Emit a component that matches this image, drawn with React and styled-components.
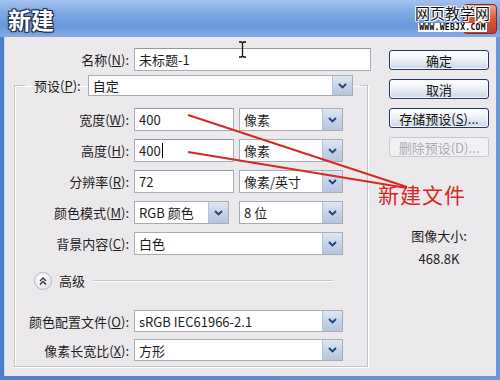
import React from 'react';
import styled, { createGlobalStyle } from 'styled-components';

const GlobalStyle = createGlobalStyle`
    html, body {
        margin: 0;
        padding: 0;
        background: #ece9ec;
    }
    body {
        font-family: "Noto Sans CJK SC", "Liberation Sans", sans-serif;
        font-size: 13px;
        color: #1d1d1d;
    }
`;

const FONT = '"Noto Sans CJK SC", "Liberation Sans", sans-serif';

const Window = styled.div`
    position: relative;
    width: 500px;
    height: 380px;
    display: flex;
    flex-direction: column;
    overflow: hidden;
    background: #5a88d2;
`;

const TitleBar = styled.div`
    height: 37px;
    flex: none;
    display: flex;
    align-items: center;
    justify-content: space-between;
    padding: 0 3px 0 8px;
    box-sizing: border-box;
    background: linear-gradient(to bottom, #a3c2ee 0%, #80a9e3 35%, #6a97dc 70%, #86ace2 100%);
`;

const Title = styled.div`
    font-family: ${FONT};
    font-size: 23px;
    font-weight: 700;
    color: #fff;
    text-shadow: -1px -1px 0 #1b2c4a, 1px -1px 0 #1b2c4a, -1px 1px 0 #1b2c4a, 1px 1px 0 #1b2c4a,
        0 0 3px #1b2c4a;
    line-height: 1;
    margin-top: 1px;
`;

const CloseBtn = styled.div`
    width: 32px;
    height: 28px;
    border-radius: 4px;
    border: 1px solid #7a2b22;
    background: linear-gradient(to bottom, #f0a08c, #d9563d 50%, #c2402a);
    display: flex;
    align-items: center;
    justify-content: center;
`;

const Frame = styled.div`
    flex: 1;
    display: flex;
    padding: 0 4px 4px 4px;
    background: linear-gradient(to right, #4f7fcb, #6a98dc);
`;

const Body = styled.div`
    flex: 1;
    display: flex;
    gap: 18px;
    padding: 11px 0 0 9px;
    background: #ece9ec;
    border-left: 1px solid #c9d6ea;
`;

const LeftCol = styled.div`
    width: 357px;
    display: flex;
    flex-direction: column;
`;

const FormRow = styled.div`
    display: grid;
    grid-template-columns: ${p => p.$label || 114}px 1fr;
    column-gap: 5px;
    align-items: center;
    height: ${p => p.$h || 23}px;
    margin-top: ${p => p.$mt || 0}px;
`;

const Label = styled.label`
    text-align: right;
    white-space: nowrap;
    font-size: 13px;
    line-height: 1;
`;

const Fields = styled.div`
    display: flex;
    gap: ${p => p.$gap || 5}px;
    height: 100%;
`;

const TextBox = styled.div`
    box-sizing: border-box;
    width: ${p => (p.$w ? `${p.$w}px` : '100%')};
    height: 100%;
    background: #fff;
    border: 1px solid #a8adb5;
    border-top-color: #9399a3;
    display: flex;
    align-items: center;
    padding-left: 4px;
    font-size: 13px;
    white-space: nowrap;
`;

const Caret = styled.span`
    display: inline-block;
    width: 1px;
    height: 15px;
    background: #000;
    margin-left: 1px;
`;

const SelectBox = styled.div`
    box-sizing: border-box;
    width: ${p => (p.$w ? `${p.$w}px` : '100%')};
    height: 100%;
    background: #fff;
    border: 1px solid #a8adb5;
    display: flex;
    align-items: stretch;
`;

const SelectValue = styled.div`
    flex: 1;
    display: flex;
    align-items: center;
    padding-left: 4px;
    font-size: 13px;
    white-space: nowrap;
    overflow: hidden;
`;

const DropBtn = styled.div`
    width: 19px;
    border-left: 1px solid #b6c3d6;
    background: linear-gradient(to bottom, #dfe7f3, #c4d2e6 55%, #b5c6df);
    display: flex;
    align-items: center;
    justify-content: center;
`;

const Chevron = () => (
    <svg width="9" height="6" viewBox="0 0 9 6">
        <path d="M1 1 L4.5 4.5 L8 1" fill="none" stroke="#23407a" strokeWidth="1.8" />
    </svg>
);

const Select = ({ w, children }) => (
    <SelectBox $w={w}>
        <SelectValue>{children}</SelectValue>
        <DropBtn>
            <Chevron />
        </DropBtn>
    </SelectBox>
);

const Group = styled.fieldset`
    margin: 4px 0 0 0;
    padding: 12px 0 5px 0;
    width: 354px;
    box-sizing: border-box;
    border: 1px solid #c3c3c8;
    box-shadow: inset 1px 1px 0 #fff, 1px 1px 0 #fff;
    display: flex;
    flex-direction: column;
    min-width: 0;
`;

const Legend = styled.legend`
    margin-left: 10px;
    padding: 0 7px 0 9px;
    display: flex;
    align-items: center;
    gap: 7px;
    height: 21px;
`;

const PresetSelect = styled.div`
    width: 265px;
    height: 21px;
`;

const Rows = styled.div`
    display: flex;
    flex-direction: column;
    gap: ${p => p.$gap || 8}px;
    padding-right: 24px;
`;

const AdvancedRow = styled.div`
    display: flex;
    align-items: center;
    height: 17px;
    margin: 17px 34px 0 19px;
    gap: 7px;
`;

const RoundBtn = styled.div`
    width: 16px;
    height: 16px;
    border-radius: 50%;
    border: 1px solid #b9bcc3;
    background: radial-gradient(circle at 40% 35%, #ffffff, #dcdde2);
    display: flex;
    align-items: center;
    justify-content: center;
`;

const Rule = styled.div`
    flex: 1;
    height: 1px;
    background: #c3c3c8;
    box-shadow: 0 1px 0 #fff;
    margin-left: 1px;
`;

const RightCol = styled.div`
    width: 100px;
    display: flex;
    flex-direction: column;
    align-items: center;
    padding-top: 2px;
`;

const Buttons = styled.div`
    display: flex;
    flex-direction: column;
    gap: 9px;
    width: 100%;
`;

const Button = styled.div`
    box-sizing: border-box;
    height: 20px;
    border-radius: 3px;
    display: flex;
    align-items: center;
    justify-content: center;
    font-size: 13px;
    white-space: nowrap;
    border: 1px solid ${p => (p.$disabled ? '#c6c9d0' : '#223766')};
    color: ${p => (p.$disabled ? '#a8abb3' : '#111')};
    background: ${p =>
        p.$disabled
            ? '#f1f1f3'
            : 'linear-gradient(to bottom, #ffffff 0%, #eef1f6 45%, #cdd7e7 100%)'};
    box-shadow: ${p => (p.$disabled ? 'none' : 'inset 0 0 0 1px #f6f8fb')};
`;

const Info = styled.div`
    margin-top: ${p => p.$mt}px;
    font-size: 13px;
    line-height: 18px;
    text-align: center;
    white-space: nowrap;
`;

const Annotation = styled.div`
    position: absolute;
    left: 378px;
    top: 181px;
    font-family: ${FONT};
    font-size: 21px;
    color: #d9261f;
    letter-spacing: 1px;
    line-height: 1.3;
`;

const Overlay = styled.svg`
    position: absolute;
    left: 0;
    top: 0;
    pointer-events: none;
`;

const Watermark = styled.div`
    position: absolute;
    right: 10px;
    top: 5px;
    display: flex;
    flex-direction: column;
    align-items: center;
    gap: 2px;
`;

const WmTitle = styled.div`
    font-family: ${FONT};
    font-size: 15px;
    line-height: 16px;
    color: #111;
    text-shadow: -1px -1px 0 #fff, 1px -1px 0 #fff, -1px 1px 0 #fff, 1px 1px 0 #fff;
`;

const WmUrl = styled.div`
    font-family: "DejaVu Sans Mono", "Liberation Mono", monospace;
    font-size: 8px;
    font-weight: 700;
    line-height: 9px;
    color: #000;
    background: #fff;
    padding: 0 1px;
    letter-spacing: 0.3px;
`;

const IBeam = styled.svg`
    position: absolute;
    left: 238px;
    top: 41px;
    pointer-events: none;
`;

export default function App() {
    return (
        <>
            <GlobalStyle />
            <Window>
                <TitleBar>
                    <Title>新建</Title>
                    <CloseBtn>
                        <svg width="14" height="14" viewBox="0 0 14 14">
                            <path d="M2 2 L12 12 M12 2 L2 12" stroke="#fff" strokeWidth="2.6" />
                        </svg>
                    </CloseBtn>
                </TitleBar>
                <Frame>
                    <Body>
                        <LeftCol>
                            <FormRow $label={115}>
                                <Label>
                                    名称(<u>N</u>):
                                </Label>
                                <TextBox>未标题-1</TextBox>
                            </FormRow>
                            <Group>
                                <Legend>
                                    <Label>
                                        预设(<u>P</u>):
                                    </Label>
                                    <PresetSelect>
                                        <Select>自定</Select>
                                    </PresetSelect>
                                </Legend>
                                <Rows>
                                    <FormRow>
                                        <Label>
                                            宽度(<u>W</u>):
                                        </Label>
                                        <Fields>
                                            <TextBox $w={100}>400</TextBox>
                                            <Select w={104}>像素</Select>
                                        </Fields>
                                    </FormRow>
                                    <FormRow>
                                        <Label>
                                            高度(<u>H</u>):
                                        </Label>
                                        <Fields>
                                            <TextBox $w={100}>
                                                400
                                                <Caret />
                                            </TextBox>
                                            <Select w={104}>像素</Select>
                                        </Fields>
                                    </FormRow>
                                    <FormRow>
                                        <Label>
                                            分辨率(<u>R</u>):
                                        </Label>
                                        <Fields>
                                            <TextBox $w={100}>72</TextBox>
                                            <Select w={104}>像素/英寸</Select>
                                        </Fields>
                                    </FormRow>
                                    <FormRow>
                                        <Label>
                                            颜色模式(<u>M</u>):
                                        </Label>
                                        <Fields $gap={10}>
                                            <Select w={95}>RGB 颜色</Select>
                                            <Select w={104}>8 位</Select>
                                        </Fields>
                                    </FormRow>
                                    <FormRow>
                                        <Label>
                                            背景内容(<u>C</u>):
                                        </Label>
                                        <Fields>
                                            <Select w={209}>白色</Select>
                                        </Fields>
                                    </FormRow>
                                </Rows>
                                <AdvancedRow>
                                    <RoundBtn>
                                        <svg width="8" height="8" viewBox="0 0 8 8">
                                            <path
                                                d="M1 4 L4 1 L7 4 M1 7.5 L4 4.5 L7 7.5"
                                                fill="none"
                                                stroke="#333"
                                                strokeWidth="1.4"
                                            />
                                        </svg>
                                    </RoundBtn>
                                    <span>高级</span>
                                    <Rule />
                                </AdvancedRow>
                                <Rows $gap={7}>
                                    <FormRow $h={22} $mt={21}>
                                        <Label>
                                            颜色配置文件(<u>O</u>):
                                        </Label>
                                        <Fields>
                                            <Select w={209}>sRGB IEC61966-2.1</Select>
                                        </Fields>
                                    </FormRow>
                                    <FormRow $h={22}>
                                        <Label>
                                            像素长宽比(<u>X</u>):
                                        </Label>
                                        <Fields>
                                            <Select w={209}>方形</Select>
                                        </Fields>
                                    </FormRow>
                                </Rows>
                            </Group>
                        </LeftCol>
                        <RightCol>
                            <Buttons>
                                <Button>确定</Button>
                                <Button>取消</Button>
                                <Button>
                                    存储预设(<u>S</u>)...
                                </Button>
                                <Button $disabled>删除预设(D)...</Button>
                            </Buttons>
                            <Info $mt={70}>图像大小:</Info>
                            <Info $mt={5}>468.8K</Info>
                        </RightCol>
                    </Body>
                </Frame>
                <Watermark>
                    <WmTitle>网页教学网</WmTitle>
                    <WmUrl>WWW.WEBJX.COM</WmUrl>
                </Watermark>
                <IBeam width="9" height="17" viewBox="0 0 9 17">
                    <path
                        d="M1 1 H3.5 L4.5 2 L5.5 1 H8 M4.5 2 V15 M1 16 H3.5 L4.5 15 L5.5 16 H8"
                        fill="none"
                        stroke="#111"
                        strokeWidth="1.3"
                    />
                </IBeam>
                <Overlay width="500" height="380" viewBox="0 0 500 380">
                    <path d="M188 115 L407 187" stroke="#d42a24" strokeWidth="2" fill="none" />
                    <path d="M188 152 L407 188" stroke="#d42a24" strokeWidth="2" fill="none" />
                </Overlay>
                <Annotation>新建文件</Annotation>
            </Window>
        </>
    );
}
